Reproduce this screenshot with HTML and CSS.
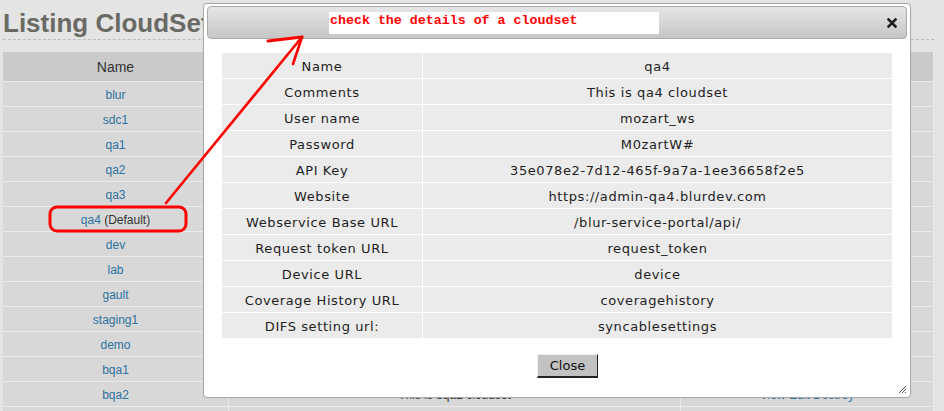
FILE: index.html
```html
<!DOCTYPE html>
<html>
<head>
<meta charset="utf-8">
<title>Listing CloudSets</title>
<link rel="stylesheet" href="styles.css">
</head>
<body>
<div class="page">
  <h1 class="title">Listing CloudSets</h1>
  <table class="list">
    <thead>
      <tr><th class="c-name">Name</th><th class="c-comm">Comments</th><th class="c-act">Actions</th></tr>
    </thead>
    <tbody>
      <tr><td><a href="#">blur</a></td><td>This is blur cloudset</td><td><a href="#">View</a> <a href="#">Edit</a> <a href="#">Destroy</a></td></tr>
      <tr><td><a href="#">sdc1</a></td><td>This is sdc1 cloudset</td><td><a href="#">View</a> <a href="#">Edit</a> <a href="#">Destroy</a></td></tr>
      <tr><td><a href="#">qa1</a></td><td>This is qa1 cloudset</td><td><a href="#">View</a> <a href="#">Edit</a> <a href="#">Destroy</a></td></tr>
      <tr><td><a href="#">qa2</a></td><td>This is qa2 cloudset</td><td><a href="#">View</a> <a href="#">Edit</a> <a href="#">Destroy</a></td></tr>
      <tr><td><a href="#">qa3</a></td><td>This is qa3 cloudset</td><td><a href="#">View</a> <a href="#">Edit</a> <a href="#">Destroy</a></td></tr>
      <tr><td><a href="#">qa4</a> <span class="dflt">(Default)</span></td><td>This is qa4 cloudset</td><td><a href="#">View</a> <a href="#">Edit</a> <a href="#">Destroy</a></td></tr>
      <tr><td><a href="#">dev</a></td><td>This is dev cloudset</td><td><a href="#">View</a> <a href="#">Edit</a> <a href="#">Destroy</a></td></tr>
      <tr><td><a href="#">lab</a></td><td>This is lab cloudset</td><td><a href="#">View</a> <a href="#">Edit</a> <a href="#">Destroy</a></td></tr>
      <tr><td><a href="#">gault</a></td><td>This is gault cloudset</td><td><a href="#">View</a> <a href="#">Edit</a> <a href="#">Destroy</a></td></tr>
      <tr><td><a href="#">staging1</a></td><td>This is staging1 cloudset</td><td><a href="#">View</a> <a href="#">Edit</a> <a href="#">Destroy</a></td></tr>
      <tr><td><a href="#">demo</a></td><td>This is demo cloudset</td><td><a href="#">View</a> <a href="#">Edit</a> <a href="#">Destroy</a></td></tr>
      <tr><td><a href="#">bqa1</a></td><td>This is bqa1 cloudset</td><td><a href="#">View</a> <a href="#">Edit</a> <a href="#">Destroy</a></td></tr>
      <tr><td><a href="#">bqa2</a></td><td>This is bqa2 cloudset</td><td><a href="#">View</a> <a href="#">Edit</a> <a href="#">Destroy</a></td></tr>
      <tr><td class="empty"></td><td class="empty"></td><td class="empty"></td></tr>
    </tbody>
  </table>
</div>

<div class="dialog">
  <div class="titlebar">
    <span class="close-x">
      <svg width="10" height="10" viewBox="0 0 10 10"><path d="M1.5 1.5 L8.5 8.5 M8.5 1.5 L1.5 8.5" stroke="#1e1e1e" stroke-width="2.6" stroke-linecap="square"/></svg>
    </span>
  </div>
  <div class="dlg-body">
    <table class="details">
      <tr><td class="lbl">Name</td><td class="val">qa4</td></tr>
      <tr><td class="lbl">Comments</td><td class="val">This is qa4 cloudset</td></tr>
      <tr><td class="lbl">User name</td><td class="val">mozart_ws</td></tr>
      <tr><td class="lbl">Password</td><td class="val">M0zartW#</td></tr>
      <tr><td class="lbl">API Key</td><td class="val">35e078e2-7d12-465f-9a7a-1ee36658f2e5</td></tr>
      <tr><td class="lbl">Website</td><td class="val">https://admin-qa4.blurdev.com</td></tr>
      <tr><td class="lbl">Webservice Base URL</td><td class="val">/blur-service-portal/api/</td></tr>
      <tr><td class="lbl">Request token URL</td><td class="val">request_token</td></tr>
      <tr><td class="lbl">Device URL</td><td class="val">device</td></tr>
      <tr><td class="lbl">Coverage History URL</td><td class="val">coveragehistory</td></tr>
      <tr><td class="lbl">DIFS setting url:</td><td class="val">syncablesettings</td></tr>
    </table>
    <div class="btnpane"><button class="btn" type="button">Close</button></div>
  </div>
  <span class="grip">
    <svg width="10" height="10" viewBox="0 0 10 10"><path d="M9 2 L2 9 M9 5 L5 9 M9 8 L8 9" stroke="#555" stroke-width="1"/></svg>
  </span>
</div>

<div class="note">check the details of a cloudset</div>

<svg class="marks" width="944" height="411" viewBox="0 0 944 411">
  <path d="M166 203 L302 37" stroke="#ff0000" stroke-width="2.6" fill="none" stroke-linecap="round"/>
  <path d="M268 41 L302 37" stroke="#ff0000" stroke-width="3" fill="none" stroke-linecap="round"/>
  <path d="M302 37 L293 64" stroke="#ff0000" stroke-width="2.6" fill="none" stroke-linecap="round"/>
  <rect x="50" y="207" width="136" height="24" rx="7" ry="7" stroke="#ff0000" stroke-width="3" fill="none"/>
</svg>
</body>
</html>
```

FILE: styles.css
```css
html, body {
  margin: 0;
  padding: 0;
}
body {
  background: #e4e4e4;
  font-family: "Liberation Sans", Arial, sans-serif;
  width: 944px;
  height: 411px;
  overflow: hidden;
  position: relative;
}

.page {
  padding: 0 10px 0 3px;
  width: 931px;
}

.title {
  margin: 0;
  padding-top: 7px;
  height: 32px;
  line-height: 32px;
  font-size: 26px;
  font-weight: bold;
  color: #6a6a64;
  border-bottom: 1px dashed #bdbdbd;
  white-space: nowrap;
}

.list {
  margin-top: 12px;
  width: 931px;
  border-collapse: collapse;
  table-layout: fixed;
}
.list th {
  background: #cacaca;
  height: 29px;
  padding: 0;
  font-weight: normal;
  font-size: 14px;
  color: #333;
  border-bottom: 1px solid #ebebeb;
  border-right: 1px solid #ebebeb;
}
.list td {
  background: #d8d8d8;
  height: 22px;
  padding: 2px 0 0 0;
  text-align: center;
  font-size: 12px;
  color: #333;
  border-bottom: 1px solid #ebebeb;
  border-right: 1px solid #ebebeb;
}
.list .c-name { width: 225px; }
.list .c-comm { width: 451px; }
.list a {
  color: #2d72a0;
  text-decoration: none;
}
.dflt { color: #333; }

.dialog {
  position: absolute;
  left: 203px;
  top: 3px;
  width: 708px;
  height: 395px;
  box-sizing: border-box;
  background: #fff;
  border: 1px solid #a8a8a8;
  border-radius: 4px;
  padding: 2px 3px 3px 3px;
  box-shadow: 0 0 1px rgba(0,0,0,0.1);
}
.titlebar {
  height: 33px;
  box-sizing: border-box;
  border: 1px solid #ababab;
  border-radius: 4px;
  background: linear-gradient(#e6e6e6, #c6c6c6);
  display: flex;
  justify-content: flex-end;
  align-items: center;
  padding-right: 9px;
}
.close-x {
  display: flex;
  width: 10px;
  height: 10px;
  margin-top: 1px;
}
.dlg-body {
  padding: 14px 14px 0 15px;
}
.details {
  width: 670px;
  border-collapse: separate;
  border-spacing: 0;
  font-family: "DejaVu Sans", Verdana, sans-serif;
  font-size: 13px;
  letter-spacing: 0.6px;
  color: #1e1e1e;
}
.details td {
  background: #ebebeb;
  height: 24px;
  padding: 1px 0 0 0;
  text-align: center;
  border-bottom: 1px solid #fff;
  white-space: nowrap;
}
.details .lbl {
  width: 200px;
  border-right: 1px solid #fff;
}
.btnpane {
  margin-top: 15px;
  padding-left: 315px;
}
.btn {
  width: 61px;
  height: 24px;
  box-sizing: border-box;
  background: #c2c2c2;
  font-family: "DejaVu Sans", Verdana, sans-serif;
  font-size: 13px;
  color: #111;
  border-top: 1px solid #f0f0f0;
  border-left: 1px solid #f0f0f0;
  border-right: 1px solid #222;
  border-bottom: 2px solid #222;
  padding: 0;
  border-radius: 0;
}
.grip {
  position: absolute;
  right: 3px;
  bottom: 3px;
  width: 10px;
  height: 10px;
  display: flex;
}

.note {
  position: absolute;
  left: 329px;
  top: 12px;
  width: 330px;
  height: 22px;
  box-sizing: border-box;
  background: #fff;
  padding-left: 1px;
  font-family: "Liberation Mono", "Courier New", monospace;
  font-weight: bold;
  font-size: 13.3px;
  line-height: 17px;
  color: #ff0000;
  white-space: nowrap;
}

.marks {
  position: absolute;
  left: 0;
  top: 0;
  pointer-events: none;
}
```
